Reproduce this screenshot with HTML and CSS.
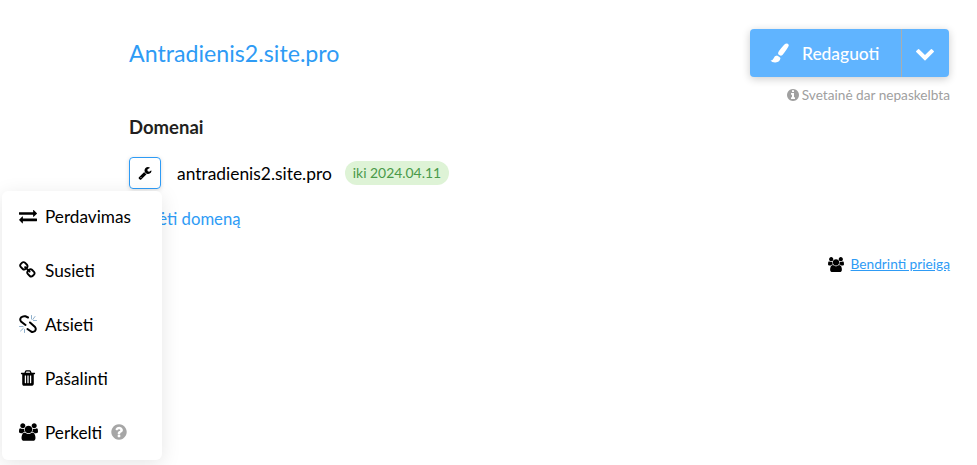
FILE: index.html
```html
<!DOCTYPE html>
<html>
<head>
	<meta charset="utf-8">
	<title>Antradienis2.site.pro</title>
	<link rel="stylesheet" href="styles.css">
</head>
<body>
	<div id="page">
		<div class="head">
			<a class="site-name" href="javascript:;">Antradienis2.site.pro</a>
			<div class="head-right">
				<div class="edit-btn">
					<span class="edit-main">
						<svg class="ico-brush" viewBox="0 0 20 20"><path d="M15.5 .8Q18.5-.2 18.8 2.5 18 5 12.5 12 10.5 13.5 8.5 11.5 7.5 10 9 8 13 2.5 15.5 .8z"/><path d="M7 12.5Q9.5 13.5 10.5 15 10 19 5.5 19.5 2 19.7 .5 17.5 2.5 17.8 3.5 15.5 4.5 12.7 7 12.5z"/></svg>
						Redaguoti
					</span>
					<span class="edit-arrow">
						<svg class="ico-chevron" viewBox="0 0 1792 1792"><path d="M1683 808l-742 741q-19 19-45 19t-45-19l-742-741q-19-19-19-45.5t19-45.5l166-165q19-19 45-19t45 19l531 531 531-531q19-19 45-19t45 19l166 165q19 19 19 45.5t-19 45.5z"/></svg>
					</span>
				</div>
				<div class="unpublished">
					<svg class="ico-info" viewBox="0 0 1792 1792"><path d="M1152 1376v-160q0-14-9-23t-23-9h-96v-512q0-14-9-23t-23-9h-320q-14 0-23 9t-9 23v160q0 14 9 23t23 9h96v320h-96q-14 0-23 9t-9 23v160q0 14 9 23t23 9h448q14 0 23-9t9-23zm-128-896v-160q0-14-9-23t-23-9h-192q-14 0-23 9t-9 23v160q0 14 9 23t23 9h192q14 0 23-9t9-23zm640 416q0 209-103 385.5t-279.5 279.5-385.5 103-385.5-103-279.5-279.5-103-385.5 103-385.5 279.5-279.5 385.5-103 385.5 103 279.5 279.5 103 385.5z"/></svg>
					Svetainė dar nepaskelbta
				</div>
			</div>
		</div>

		<h2 class="domains-title">Domenai</h2>
		<div class="domain-row">
			<span class="tool-btn">
				<svg class="ico-wrench" viewBox="0 0 1792 1792"><path d="M448 1472q0-26-19-45t-45-19-45 19-19 45 19 45 45 19 45-19 19-45zm644-420l-682 682q-37 37-90 37-52 0-91-37l-106-108q-38-36-38-90 0-53 38-91l681-681q39 98 114.5 173.5t173.5 114.5zm634-435q0 39-23 106-47 134-164.5 217.5t-258.5 83.5q-185 0-316.5-131.5t-131.5-316.5 131.5-316.5 316.5-131.5q58 0 121.5 16.5t107.5 46.5q16 11 16 28t-16 28l-293 169v224l193 107q5-3 79-48.5t135.5-81 70.5-35.5q15 0 23.5 10t8.5 25z"/></svg>
			</span>
			<span class="domain-name">antradienis2.site.pro</span>
			<span class="badge">iki 2024.04.11</span>
		</div>
		<a class="add-domain" href="javascript:;">Pridėti domeną</a>

		<div class="share">
			<svg class="ico-users" viewBox="0 0 1920 1792"><path d="M593 896q-162 5-265 128h-134q-82 0-138-40.5t-56-118.5q0-353 124-353 6 0 43.5 21t97.5 42.5 119 21.5q67 0 133-23-5 37-5 66 0 139 81 256zm1071 637q0 120-73 189.5t-194 69.5h-874q-121 0-194-69.5t-73-189.5q0-53 3.5-103.5t14-109 26.5-108.5 43-97.5 62-81 85.5-53.5 111.5-20q10 0 43 21.5t73 48 107 48 135 21.5 135-21.5 107-48 73-48 43-21.5q61 0 111.5 20t85.5 53.5 62 81 43 97.5 26.5 108.5 14 109 3.5 103.5zm-1024-1277q0 106-75 181t-181 75-181-75-75-181 75-181 181-75 181 75 75 181zm704 384q0 159-112.5 271.5t-271.5 112.5-271.5-112.5-112.5-271.5 112.5-271.5 271.5-112.5 271.5 112.5 112.5 271.5zm576 225q0 78-56 118.5t-138 40.5h-134q-103-123-265-128 81-117 81-256 0-29-5-66 66 23 133 23 59 0 119-21.5t97.5-42.5 43.5-21q124 0 124 353zm-128-609q0 106-75 181t-181 75-181-75-75-181 75-181 181-75 181 75 75 181z"/></svg>
			<a href="javascript:;">Bendrinti prieigą</a>
		</div>
	</div>

	<ul class="menu">
		<li>
			<svg viewBox="0 0 1792 1792"><path d="M1792 1184v192q0 13-9.5 22.5t-22.5 9.5h-1376v192q0 13-9.5 22.5t-22.5 9.5q-12 0-24-10l-319-320q-9-9-9-22 0-14 9-23l320-320q9-9 23-9 13 0 22.5 9.5t9.5 22.5v192h1376q13 0 22.5 9.5t9.5 22.5zm0-544q0 14-9 23l-320 320q-9 9-23 9-13 0-22.5-9.5t-9.5-22.5v-192h-1376q-13 0-22.5-9.5t-9.5-22.5v-192q0-13 9.5-22.5t22.5-9.5h1376v-192q0-14 9-23t23-9q12 0 24 10l319 319q9 9 9 23z"/></svg>
			Perdavimas
		</li>
		<li>
			<svg viewBox="0 0 1792 1792"><path d="M1456 1216q0-40-28-68l-208-208q-28-28-68-28-42 0-72 32 3 3 19 18.5t21.5 21.5 15 19 13 25.5 3.5 27.5q0 40-28 68t-68 28q-15 0-27.5-3.5t-25.5-13-19-15-21.5-21.5-18.5-19q-33 31-33 73 0 40 28 68l206 207q27 27 68 27 40 0 68-26l147-146q28-28 28-67zm-703-705q0-40-28-68l-206-207q-28-28-68-28-39 0-68 27l-147 146q-28 28-28 67 0 40 28 68l208 208q27 27 68 27 42 0 72-31-3-3-19-18.5t-21.5-21.5-15-19-13-25.5-3.5-27.5q0-40 28-68t68-28q15 0 27.5 3.5t25.5 13 19 15 21.5 21.5 18.5 19q33-31 33-73zm895 705q0 120-85 203l-147 146q-83 83-203 83-121 0-204-85l-206-207q-83-83-83-203 0-123 88-209l-88-88q-86 88-208 88-120 0-204-84l-208-208q-84-84-84-204t85-203l147-146q83-83 203-83 121 0 204 85l206 207q83 83 83 203 0 123-88 209l88 88q86-88 208-88 120 0 204 84l208 208q84 84 84 204z"/></svg>
			Susieti
		</li>
		<li>
			<svg class="ico-unlink" viewBox="0 0 18 18">
				<path class="chain" d="M9 2.5 6.5 1.300Q4 .7 2 2.5 .5 4.5 2 6.500L6.500 10"/>
				<path class="chain" d="M11 7.500 16 12Q17.500 14 16 16 14 17.500 12 16.500L8.500 14"/>
				<path class="sparks" d="M12.500 .5V4M16 1.500 13.800 4.500M17.500 5.500H14.500M.5 11.500H4M1.500 16 4.200 13.500M5.500 17.500V14.500"/>
			</svg>
			Atsieti
		</li>
		<li>
			<svg viewBox="0 0 1792 1792"><path d="M704 1376v-704q0-14-9-23t-23-9h-64q-14 0-23 9t-9 23v704q0 14 9 23t23 9h64q14 0 23-9t9-23zm256 0v-704q0-14-9-23t-23-9h-64q-14 0-23 9t-9 23v704q0 14 9 23t23 9h64q14 0 23-9t9-23zm256 0v-704q0-14-9-23t-23-9h-64q-14 0-23 9t-9 23v704q0 14 9 23t23 9h64q14 0 23-9t9-23zm-544-992h448l-48-117q-7-9-17-11h-317q-10 2-17 11zm928 32v64q0 14-9 23t-23 9h-96v948q0 83-47 143.5t-113 60.5h-832q-66 0-113-58.5t-47-141.5v-952h-96q-14 0-23-9t-9-23v-64q0-14 9-23t23-9h309l70-167q15-37 54-63t79-26h320q40 0 79 26t54 63l70 167h309q14 0 23 9t9 23z"/></svg>
			Pašalinti
		</li>
		<li>
			<svg class="wide" viewBox="0 0 1920 1792"><path d="M593 896q-162 5-265 128h-134q-82 0-138-40.5t-56-118.5q0-353 124-353 6 0 43.5 21t97.5 42.5 119 21.5q67 0 133-23-5 37-5 66 0 139 81 256zm1071 637q0 120-73 189.5t-194 69.5h-874q-121 0-194-69.5t-73-189.5q0-53 3.5-103.5t14-109 26.5-108.5 43-97.5 62-81 85.5-53.5 111.5-20q10 0 43 21.5t73 48 107 48 135 21.5 135-21.5 107-48 73-48 43-21.5q61 0 111.5 20t85.5 53.5 62 81 43 97.5 26.5 108.5 14 109 3.5 103.5zm-1024-1277q0 106-75 181t-181 75-181-75-75-181 75-181 181-75 181 75 75 181zm704 384q0 159-112.5 271.5t-271.5 112.5-271.5-112.5-112.5-271.5 112.5-271.5 271.5-112.5 271.5 112.5 112.5 271.5zm576 225q0 78-56 118.5t-138 40.5h-134q-103-123-265-128 81-117 81-256 0-29-5-66 66 23 133 23 59 0 119-21.5t97.5-42.5 43.5-21q124 0 124 353zm-128-609q0 106-75 181t-181 75-181-75-75-181 75-181 181-75 181 75 75 181z"/></svg>
			Perkelti
			<svg class="ico-help" viewBox="0 0 1792 1792"><path d="M1024 1376v-192q0-14-9-23t-23-9h-192q-14 0-23 9t-9 23v192q0 14 9 23t23 9h192q14 0 23-9t9-23zm256-672q0-88-55.5-163t-138.5-116-170-41q-243 0-371 213-15 24 8 42l132 100q7 6 19 6 16 0 25-12 53-68 86-92 34-24 86-24 48 0 85.5 26t37.5 59q0 38-20 61t-68 45q-63 28-115.5 86.5t-52.5 125.5v36q0 14 9 23t23 9h192q14 0 23-9t9-23q0-19 21.5-49.5t54.5-49.5q32-18 49-28.5t46-35 44.5-48 28-60.5 12.5-81zm384 192q0 209-103 385.5t-279.5 279.5-385.5 103-385.5-103-279.5-279.5-103-385.5 103-385.5 279.5-279.5 385.5-103 385.5 103 279.5 279.5 103 385.5z"/></svg>
		</li>
	</ul>
</body>
</html>
```

FILE: styles.css
```css
* { box-sizing: border-box; margin: 0; padding: 0; }
html, body { height: 100%; overflow: hidden; }
body { background: #fff; color: #000; font-family: "Lato", "Liberation Sans", sans-serif; }
a { color: #2e9bf5; text-decoration: none; }
svg { fill: currentColor; display: block; flex: none; }

#page { padding: 29px 27px 0 129px; }

.head { display: flex; justify-content: space-between; align-items: flex-start; }
.site-name { font-size: 23.2px; line-height: 32px; margin-top: 8px; }
.head-right { display: flex; flex-direction: column; align-items: flex-end; }

.edit-btn { display: flex; width: 199px; height: 48px; margin-right: 1px; background: #60b4ff; border-radius: 4px; color: #fff; box-shadow: 0 2px 8px rgba(0,0,0,.2); }
.edit-main { flex: 1; display: flex; align-items: center; gap: 12px; padding-left: 20px; font-size: 17.4px; font-weight: 500; border-right: 1px solid #a8aeb0; }
.edit-arrow { width: 47px; padding-right: 2px; display: flex; align-items: center; justify-content: center; }
.ico-brush { width: 20px; height: 20px; }
.ico-chevron { width: 20px; height: 20px; }

.unpublished { display: flex; align-items: center; gap: 2px; margin-top: 9px; font-size: 13.65px; line-height: 18px; color: #a0a0a0; }
.ico-info { width: 14px; height: 14px; }

.domains-title { font-size: 18.5px; line-height: 22px; font-weight: 700; color: #231f20; margin-top: 12px; }

.domain-row { display: flex; align-items: center; margin-top: 19px; }
.tool-btn { width: 32px; height: 32px; display: flex; align-items: center; justify-content: center; border: 1px solid #2e9bf5; border-radius: 4px; box-shadow: 0 1px 4px rgba(0,0,0,.15); }
.ico-wrench { width: 14px; height: 14px; }
.domain-name { margin-left: 16px; font-size: 17.4px; }
.badge { margin-left: 13px; height: 24px; padding: 0 8px; border-radius: 12px; background: #def3d6; color: #4a9a4a; font-size: 13.9px; line-height: 24px; }

.add-domain { display: block; margin-top: 18px; font-size: 16.7px; line-height: 24px; }

.share { display: flex; justify-content: flex-end; align-items: center; gap: 7px; margin-top: 24px; font-size: 13.7px; line-height: 18px; }
.share a { text-decoration: underline; }
.ico-users { width: 16px; height: 15px; }

.menu { position: absolute; left: 2px; top: 191px; width: 160px; height: 269px; list-style: none; background: #fff; border-radius: 6px; box-shadow: 0 4px 20px rgba(0,0,0,.1); }
.menu li { display: flex; align-items: center; gap: 8px; height: 54px; padding: 0 0 4px 17px; font-size: 17.2px; }
.menu li svg { width: 18px; height: 18px; }
.menu li svg.wide { width: 19px; height: 18px; margin-right: -1px; }
.menu li svg.ico-help { width: 18px; height: 18px; color: #a6a6a6; }
.ico-unlink path { fill: none; stroke-linecap: round; }
.ico-unlink .chain { stroke: #000; stroke-width: 2; }
.ico-unlink .sparks { stroke: #8fb0cc; stroke-width: 1; }
```
